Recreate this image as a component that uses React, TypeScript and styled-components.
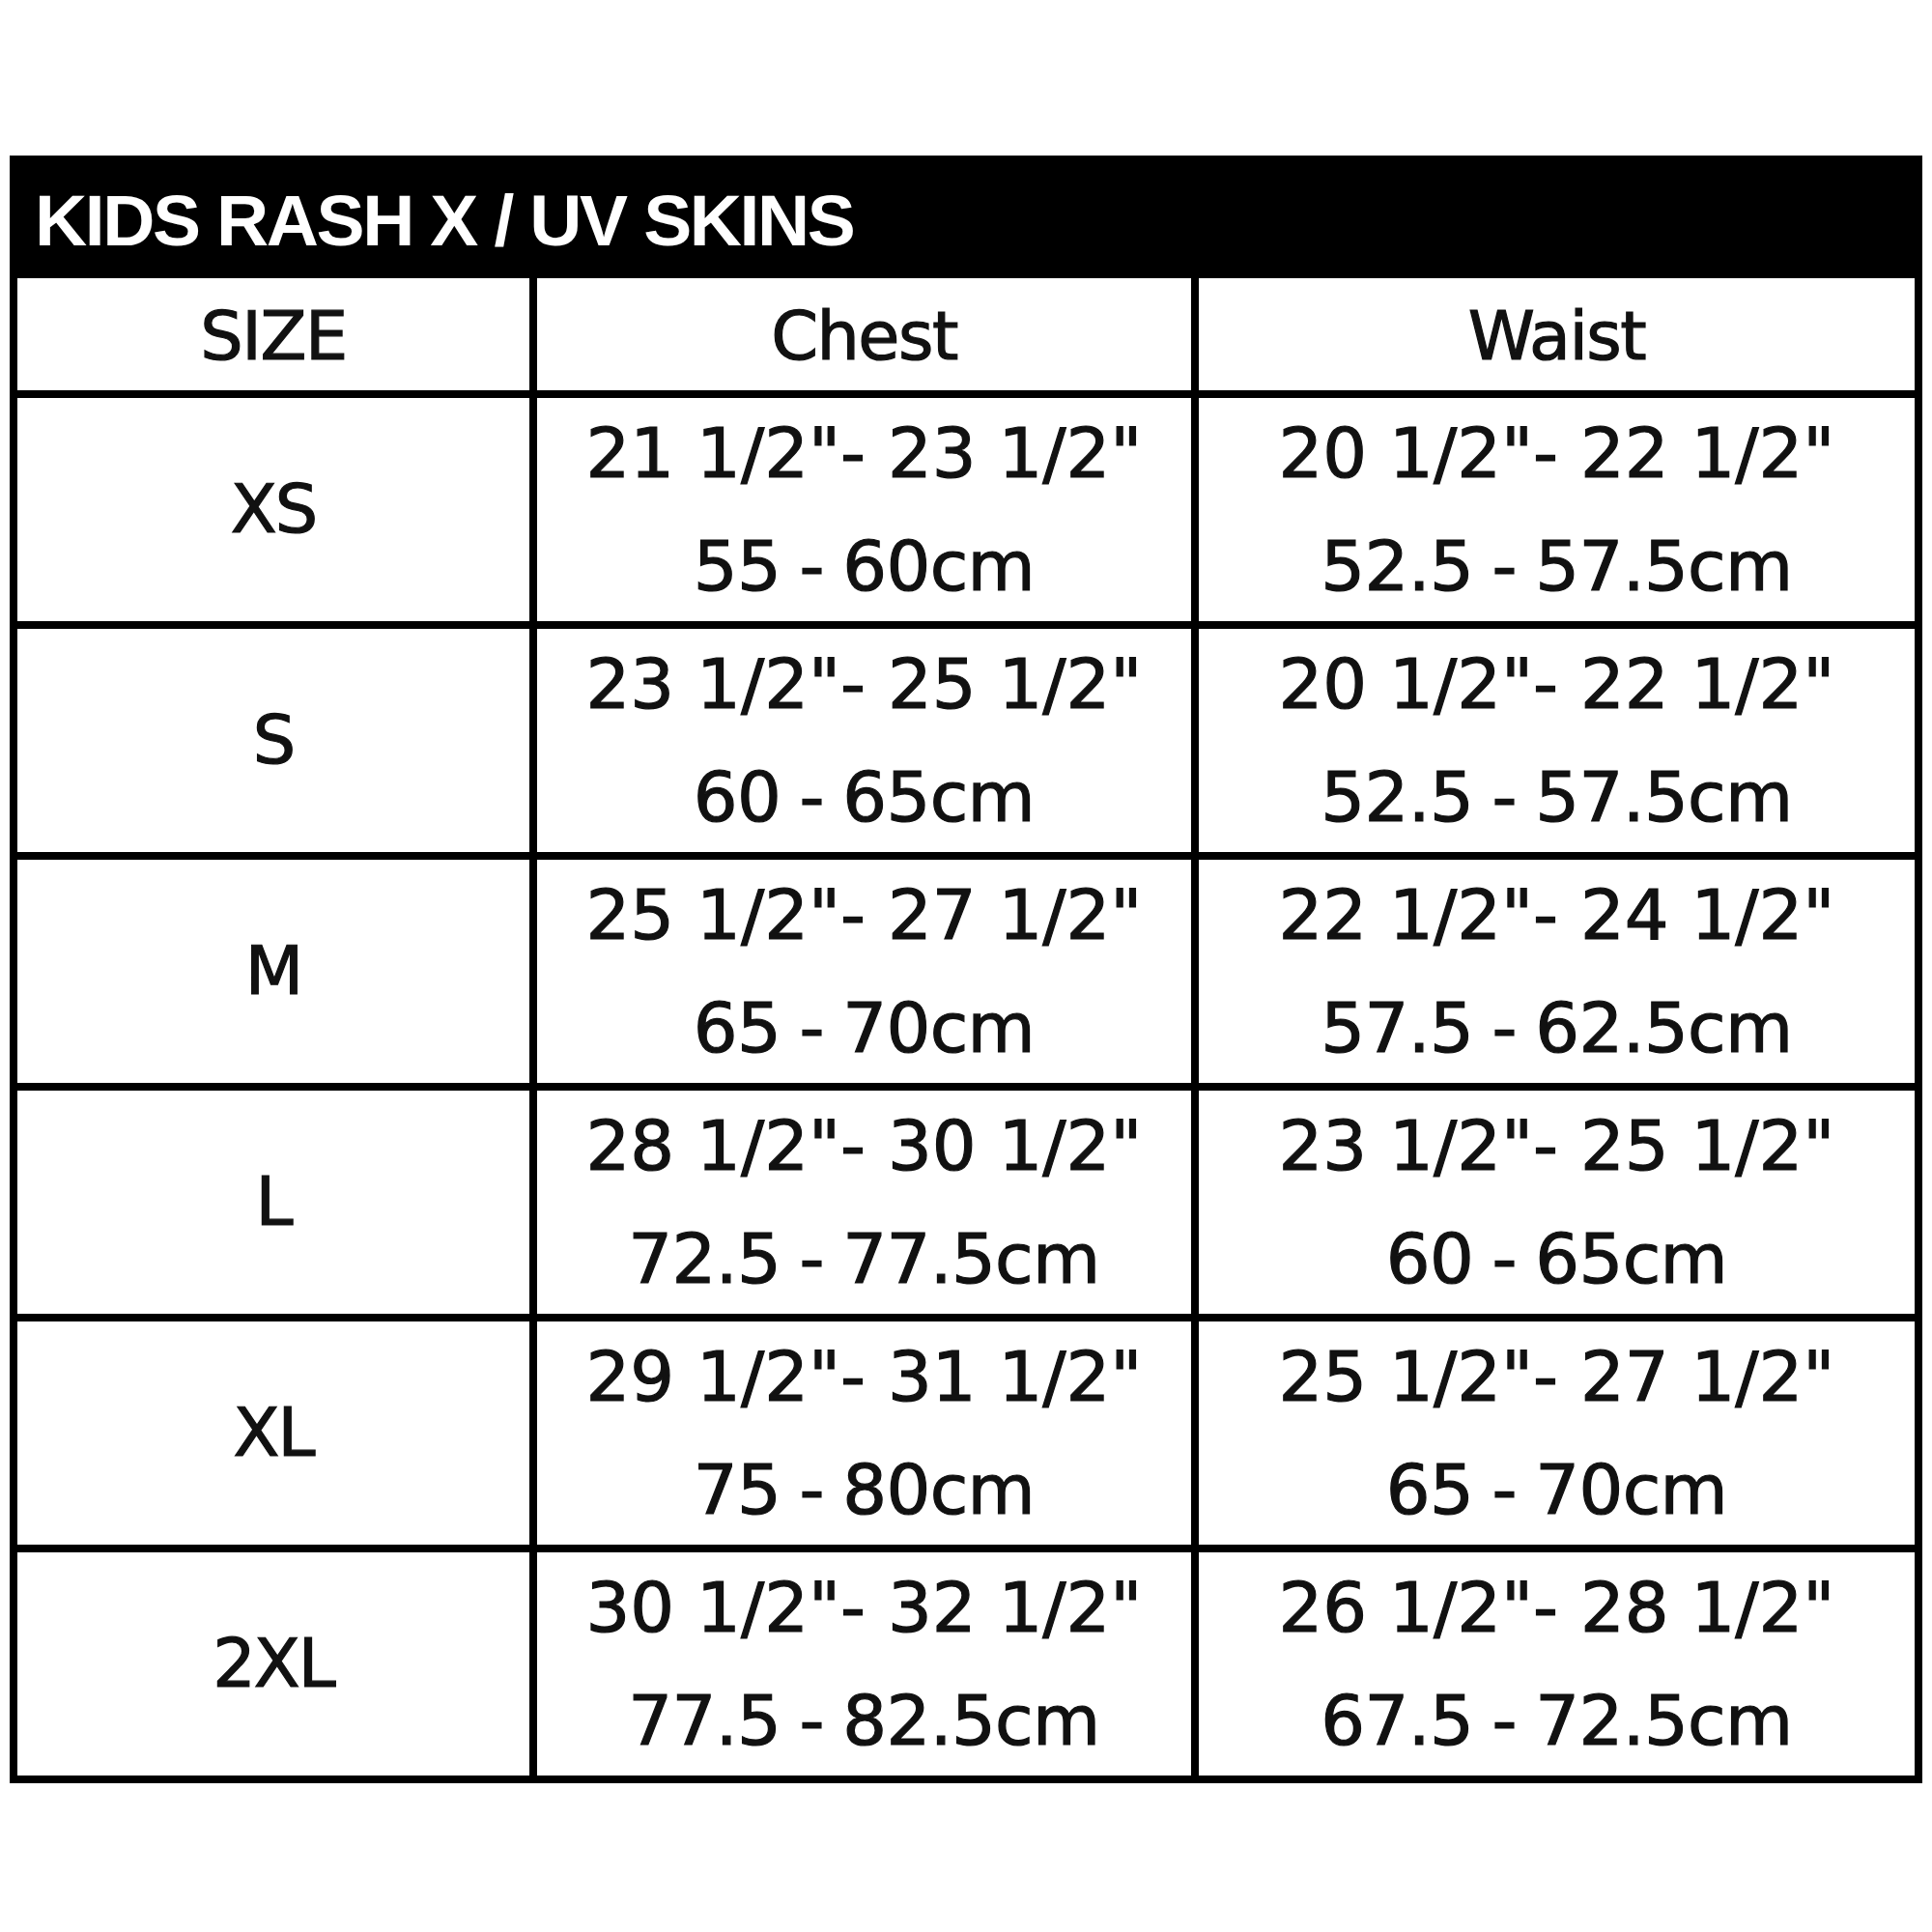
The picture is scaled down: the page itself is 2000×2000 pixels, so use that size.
import React from "react"
import styled, {createGlobalStyle} from "styled-components"

const GlobalStyle = createGlobalStyle`
    html, body {
        margin: 0;
        padding: 0;
        background: #fff;
    }
`

const Page = styled.div`
    padding: 161px 10px 0 10px;
    width: 1980px;
`

const Chart = styled.div`
    background: #000;
    padding: 0 8px 8px 8px;
`

const Title = styled.div`
    height: 127px;
    display: flex;
    align-items: center;
    padding: 6px 0 0 18px;
    box-sizing: border-box;
    color: #fff;
    font-family: "Liberation Sans", Arial, sans-serif;
    font-weight: 700;
    font-size: 75px;
    letter-spacing: -2.4px;
`

const Grid = styled.div`
    display: grid;
    grid-template-columns: 530px 677px 741px;
    grid-template-rows: 116px repeat(6, 231px);
    gap: 8px;
`

const Cell = styled.div<{$head?: boolean}>`
    background: #fff;
    color: #111;
    display: flex;
    flex-direction: column;
    align-items: center;
    justify-content: center;
    font-family: "DejaVu Sans", sans-serif;
    font-size: ${p => (p.$head ? "70px" : "72px")};
    letter-spacing: ${p => (p.$head ? "-1.5px" : "0")};
    line-height: 117px;
    padding-top: ${p => (p.$head ? "4px" : "0")};
    box-sizing: border-box;
    white-space: nowrap;
    -webkit-text-stroke: 1.2px #111;
`

const SizeLabel = styled.span`
    font-size: 70px;
    letter-spacing: -2px;
`

const Line = styled.span<{$metric?: boolean}>`
    word-spacing: ${p => (p.$metric ? "-3px" : "0")};
    letter-spacing: ${p => (p.$metric ? "-0.6px" : "0")};
`

type Row = {size: string; chest: [string, string]; waist: [string, string]}

const rows: Row[] = [
    {size: "XS", chest: ["21 1/2\"- 23 1/2\"", "55 - 60cm"], waist: ["20 1/2\"- 22 1/2\"", "52.5 - 57.5cm"]},
    {size: "S", chest: ["23 1/2\"- 25 1/2\"", "60 - 65cm"], waist: ["20 1/2\"- 22 1/2\"", "52.5 - 57.5cm"]},
    {size: "M", chest: ["25 1/2\"- 27 1/2\"", "65 - 70cm"], waist: ["22 1/2\"- 24 1/2\"", "57.5 - 62.5cm"]},
    {size: "L", chest: ["28 1/2\"- 30 1/2\"", "72.5 - 77.5cm"], waist: ["23 1/2\"- 25 1/2\"", "60 - 65cm"]},
    {size: "XL", chest: ["29 1/2\"- 31 1/2\"", "75 - 80cm"], waist: ["25 1/2\"- 27 1/2\"", "65 - 70cm"]},
    {size: "2XL", chest: ["30 1/2\"- 32 1/2\"", "77.5 - 82.5cm"], waist: ["26 1/2\"- 28 1/2\"", "67.5 - 72.5cm"]},
]

export default function App() {
    return (
        <>
            <GlobalStyle />
            <Page>
                <Chart>
                    <Title>KIDS RASH X / UV SKINS</Title>
                    <Grid>
                        <Cell $head>SIZE</Cell>
                        <Cell $head>Chest</Cell>
                        <Cell $head>Waist</Cell>
                        {rows.map(r => (
                            <React.Fragment key={r.size}>
                                <Cell>
                                    <SizeLabel>{r.size}</SizeLabel>
                                </Cell>
                                <Cell>
                                    <Line>{r.chest[0]}</Line>
                                    <Line $metric>{r.chest[1]}</Line>
                                </Cell>
                                <Cell>
                                    <Line>{r.waist[0]}</Line>
                                    <Line $metric>{r.waist[1]}</Line>
                                </Cell>
                            </React.Fragment>
                        ))}
                    </Grid>
                </Chart>
            </Page>
        </>
    )
}
